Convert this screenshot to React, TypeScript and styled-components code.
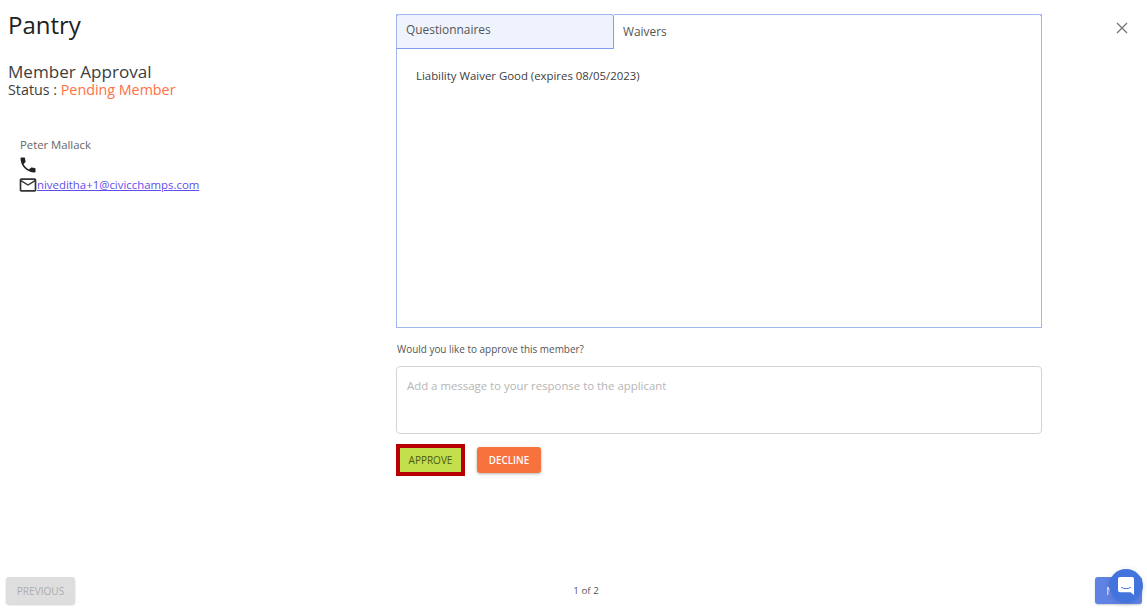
import React from 'react';
import styled, { createGlobalStyle } from 'styled-components';

const GlobalStyle = createGlobalStyle`
  html, body {
    margin: 0;
    padding: 0;
    height: 100%;
    background: #fff;
    overflow: hidden;
    font-family: "Open Sans", "Liberation Sans", sans-serif;
  }
  * {
    box-sizing: border-box;
  }
`;

const Page = styled.div`
  position: relative;
  width: 1147px;
  height: 615px;
  display: flex;
  flex-direction: column;
  overflow: hidden;
`;

const Main = styled.div`
  flex: 1;
  display: flex;
  padding-top: 14px;
`;

const Sidebar = styled.aside`
  width: 396px;
  padding-left: 8px;
  color: #333;
`;

const Title = styled.h1`
  margin: -4px 0 0;
  font-size: 24px;
  line-height: 30px;
  font-weight: 400;
  color: #212121;
`;

const Subtitle = styled.h2`
  margin: 21px 0 0;
  font-size: 17.1px;
  line-height: 22px;
  font-weight: 400;
  color: #3d3d3d;
`;

const Status = styled.div`
  font-size: 14.3px;
  line-height: 14px;
  color: #3d3d3d;
`;

const Pending = styled.span`
  color: #ff7043;
`;

const Contact = styled.div`
  margin: 39px 0 0 10px;
  display: flex;
  flex-direction: column;
  font-size: 11.3px;
  color: #666;
`;

const ContactName = styled.div`
  line-height: 18px;
  padding-left: 2px;
`;

const IconRow = styled.div`
  display: flex;
  align-items: center;
  height: 20px;
  margin-top: 1px;
  &:last-child {
    margin-top: 0;
  }
`;

const Email = styled.a`
  color: #5f4dee;
  text-decoration: underline;
  font-size: 11.4px;
  line-height: 18px;
  margin-left: -1px;
`;

const Content = styled.section`
  width: 646px;
`;

const TabPanel = styled.div`
  height: 314px;
  border: 1px solid #a0b6ee;
  border-top: 0;
  display: flex;
  flex-direction: column;
`;

const TabRow = styled.div`
  display: flex;
  height: 35px;
  margin: 0 -1px;
`;

const Tab = styled.div<{ $active?: boolean }>`
  font-size: 11.9px;
  color: #555;
  background: ${({ $active }) => ($active ? '#fff' : '#eef3fd')};
  width: ${({ $active }) => ($active ? 'auto' : '218px')};
  flex: ${({ $active }) => ($active ? '1' : 'none')};
  padding: ${({ $active }) => ($active ? '7px 9px' : '5px 9px')};
  line-height: 18px;
  border-top: 1px solid #a0b6ee;
  border-left: ${({ $active }) => ($active ? 'none' : '1px solid #a0b6ee')};
  border-right: ${({ $active }) => ($active ? '1px solid #a0b6ee' : '1px solid #7d9ff0')};
  border-bottom: ${({ $active }) => ($active ? 'none' : '1px solid #7d9ff0')};
  border-radius: ${({ $active }) => ($active ? '0 3px 0 0' : '3px 3px 0 0')};
`;

const TabBody = styled.div`
  padding: 18px 19px;
  font-size: 11.4px;
  line-height: 18px;
  color: #3d3d3d;
`;

const Question = styled.p`
  margin: 13px 0 0 1px;
  font-size: 9.95px;
  line-height: 17px;
  color: #555;
`;

const MessageBox = styled.textarea`
  display: block;
  width: 100%;
  height: 68px;
  margin-top: 8px;
  padding: 10px 10px;
  resize: none;
  border: 1px solid #d4d4d4;
  border-radius: 4px;
  outline: none;
  font-family: inherit;
  font-size: 11.4px;
  line-height: 18px;
  &::placeholder {
    color: #b5b5b5;
    opacity: 1;
  }
`;

const Actions = styled.div`
  display: flex;
  align-items: center;
  gap: 12px;
  margin-top: 10px;
`;

const ApproveButton = styled.button`
  width: 69px;
  height: 32px;
  padding: 0;
  border: 4px solid #b80000;
  background: #c3df4b;
  color: #4c5a12;
  font-family: inherit;
  font-size: 10px;
`;

const DeclineButton = styled.button`
  width: 64px;
  height: 26px;
  padding: 0;
  border: 0;
  border-radius: 3px;
  background: #f7723c;
  color: #fff;
  font-family: inherit;
  font-size: 9.8px;
  font-weight: 600;
  box-shadow: 0 1px 3px rgba(0, 0, 0, 0.3);
`;

const Footer = styled.footer`
  height: 38px;
  padding: 0 5px 11px 6px;
  display: flex;
  align-items: center;
  justify-content: space-between;
`;

const PagerButton = styled.button<{ $disabled?: boolean }>`
  height: 27px;
  width: ${({ $disabled }) => ($disabled ? '69px' : '47px')};
  padding: 0;
  border: 0;
  border-radius: 3px;
  background: ${({ $disabled }) => ($disabled ? '#dedede' : '#5f82e4')};
  color: ${({ $disabled }) => ($disabled ? '#adadad' : '#fff')};
  font-family: inherit;
  font-size: 10.1px;
  box-shadow: 0 1px 2px rgba(0, 0, 0, 0.2);
`;

const PageCount = styled.span`
  font-size: 9.8px;
  color: #555;
  margin-left: 2px;
`;

const CloseButton = styled.button`
  position: absolute;
  top: 20px;
  left: 1114px;
  width: 16px;
  height: 16px;
  padding: 0;
  border: 0;
  background: none;
  display: flex;
  align-items: center;
  justify-content: center;
`;

const ChatBubble = styled.div`
  position: absolute;
  left: 1109px;
  top: 569px;
  width: 34px;
  height: 34px;
  border-radius: 50%;
  background: #4374de;
  box-shadow: 0 1px 6px rgba(0, 0, 0, 0.12);
  display: flex;
  align-items: center;
  justify-content: center;
`;

const App = () => (
  <Page>
    <GlobalStyle />
    <Main>
      <Sidebar>
        <Title>Pantry</Title>
        <Subtitle>Member Approval</Subtitle>
        <Status>
          Status : <Pending>Pending Member</Pending>
        </Status>
        <Contact>
          <ContactName>Peter Mallack</ContactName>
          <IconRow>
            <svg width="20" height="20" viewBox="0 0 24 24" fill="#222">
              <path d="M6.62 10.79c1.44 2.83 3.76 5.14 6.59 6.59l2.2-2.2c.27-.27.67-.36 1.02-.24 1.12.37 2.33.57 3.57.57.55 0 1 .45 1 1V20c0 .55-.45 1-1 1-9.39 0-17-7.61-17-17 0-.55.45-1 1-1h3.5c.55 0 1 .45 1 1 0 1.25.2 2.45.57 3.57.11.35.03.74-.25 1.02l-2.2 2.2z" />
            </svg>
          </IconRow>
          <IconRow>
            <svg width="20" height="20" viewBox="0 0 24 24" fill="#333">
              <path d="M20 4H4c-1.1 0-2 .9-2 2v12c0 1.1.9 2 2 2h16c1.1 0 2-.9 2-2V6c0-1.100-.9-2-2-2zm0 14H4V8l8 5 8-5v10zm-8-7L4 6h16l-8 5z" />
            </svg>
            <Email href="#">niveditha+1@civicchamps.com</Email>
          </IconRow>
        </Contact>
      </Sidebar>
      <Content>
        <TabPanel>
          <TabRow>
            <Tab>Questionnaires</Tab>
            <Tab $active>Waivers</Tab>
          </TabRow>
          <TabBody>Liability Waiver Good (expires 08/05/2023)</TabBody>
        </TabPanel>
        <Question>Would you like to approve this member?</Question>
        <MessageBox placeholder="Add a message to your response to the applicant" />
        <Actions>
          <ApproveButton>APPROVE</ApproveButton>
          <DeclineButton>DECLINE</DeclineButton>
        </Actions>
      </Content>
    </Main>
    <Footer>
      <PagerButton $disabled>PREVIOUS</PagerButton>
      <PageCount>1 of 2</PageCount>
      <PagerButton>NEXT</PagerButton>
    </Footer>
    <CloseButton aria-label="Close">
      <svg width="16" height="16" viewBox="0 0 16 16" stroke="#777" strokeWidth="1.4" fill="none">
        <path d="M3 3l10 10M13 3L3 13" />
      </svg>
    </CloseButton>
    <ChatBubble>
      <svg width="16" height="18" viewBox="0 0 16 18">
        <path
          d="M2 0h12a2 2 0 0 1 2 2v16l-3.500-2.800H2a2 2 0 0 1-2-2V2a2 2 0 0 1 2-2z"
          fill="#fff"
        />
        <path d="M3.500 10.500c2.800 1.600 6.200 1.600 9 0" stroke="#4374de" strokeWidth="1" fill="none" strokeLinecap="round" />
      </svg>
    </ChatBubble>
  </Page>
);

export default App;
